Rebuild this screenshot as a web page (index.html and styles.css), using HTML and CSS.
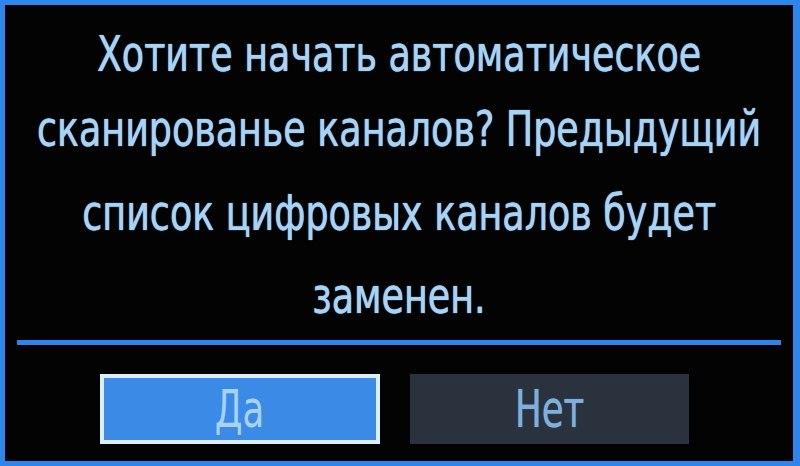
FILE: index.html
```html
<!DOCTYPE html>
<html lang="ru">
<head>
<meta charset="utf-8">
<link rel="stylesheet" href="styles.css">
</head>
<body>
<div class="frame">
  <div class="message">
    <div class="line">Хотите начать автоматическое</div>
    <div class="line">сканированье каналов? Предыдущий</div>
    <div class="line">список цифровых каналов будет</div>
    <div class="line">заменен.</div>
  </div>
  <div class="separator"></div>
  <div class="buttons">
    <div class="btn btn-active"><span class="btn-label">Да</span></div>
    <div class="btn btn-inactive"><span class="btn-label">Нет</span></div>
  </div>
</div>
</body>
</html>
```
FILE: styles.css
```css
html, body {
  margin: 0;
  padding: 0;
  background: #000;
}
.frame {
  width: 800px;
  height: 466px;
  box-sizing: border-box;
  border: 5px solid #2e86ec;
  border-right-width: 7px;
  background: #030303;
  display: flex;
  flex-direction: column;
  font-family: "DejaVu Sans Condensed", "DejaVu Sans", sans-serif;
  color: #a9d3f3;
}
.message {
  padding-top: 9px;
  display: flex;
  flex-direction: column;
  align-items: center;
}
.line {
  font-size: 50px;
  line-height: 80px;
  height: 80px;
  white-space: nowrap;
  transform: scaleX(0.81);
  text-shadow: 0 0 1px #7fb8ec, 0 0 1px #7fb8ec;
}
.line:nth-child(2) {
  margin-top: -5px;
  height: 84px;
}
.line:nth-child(4) {
  margin-top: 3px;
}
.separator {
  margin: 4px 12px 0 12px;
  height: 5px;
  background: #2c84ee;
}
.buttons {
  display: flex;
  gap: 30px;
  padding-left: 95px;
  margin-top: 29px;
}
.btn {
  width: 280px;
  height: 70px;
  box-sizing: border-box;
  display: flex;
  align-items: center;
  justify-content: center;
  font-size: 52px;
}
.btn-label {
  display: inline-block;
  transform: scaleX(0.76);
}
.btn-active {
  background: #3a8ae6;
  border: 4px solid #dceefc;
  color: #a8d2f2;
}
.btn-inactive {
  background: #29323d;
  color: #7eb0de;
  width: 279px;
  text-shadow: 0 0 1px #7eb0de;
}
```
